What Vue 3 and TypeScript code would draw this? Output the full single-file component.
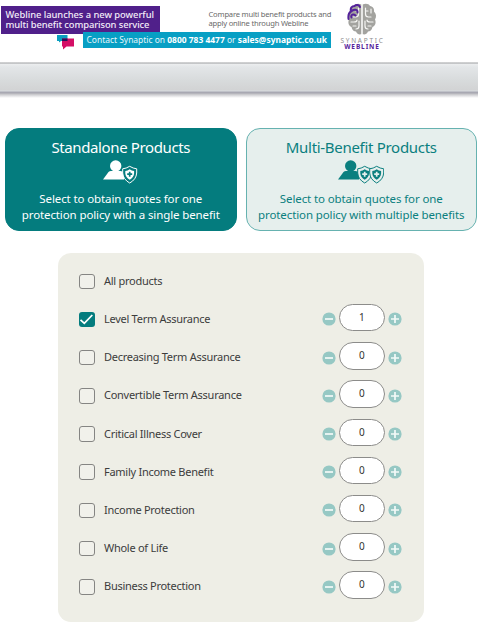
<script setup lang="ts">
import { reactive, ref } from 'vue'

interface Product {
  name: string
  selected: boolean
  count: number
}

interface Mode {
  title: string
  lines: string[]
  shields: number
}

const modes: Mode[] = [
  {
    title: 'Standalone Products',
    lines: ['Select to obtain quotes for one', 'protection policy with a single benefit'],
    shields: 1,
  },
  {
    title: 'Multi-Benefit Products',
    lines: ['Select to obtain quotes for one', 'protection policy with multiple benefits'],
    shields: 2,
  },
]

const activeMode = ref(0)
const allSelected = ref(false)

const products = reactive<Product[]>([
  { name: 'Level Term Assurance', selected: true, count: 1 },
  { name: 'Decreasing Term Assurance', selected: false, count: 0 },
  { name: 'Convertible Term Assurance', selected: false, count: 0 },
  { name: 'Critical Illness Cover', selected: false, count: 0 },
  { name: 'Family Income Benefit', selected: false, count: 0 },
  { name: 'Income Protection', selected: false, count: 0 },
  { name: 'Whole of Life', selected: false, count: 0 },
  { name: 'Business Protection', selected: false, count: 0 },
])

function setCount(product: Product, count: number) {
  product.count = Math.max(0, count)
  product.selected = product.count > 0
}

function toggle(product: Product) {
  setCount(product, product.selected ? 0 : 1)
}

function toggleAll() {
  allSelected.value = !allSelected.value
  products.forEach((p) => setCount(p, allSelected.value ? 1 : 0))
}
</script>

<template>
  <div class="page">
    <header class="banner">
      <div class="promo">
        <div class="promo-top">
          <div class="headline">
            <span class="h1">Webline launches a new powerful</span>
            <span class="h2">multi benefit comparison service</span>
          </div>
          <div class="compare">
            <span class="c1">Compare multi benefit products and</span>
            <span class="c2">apply online through Webline</span>
          </div>
        </div>
        <div class="promo-bottom">
          <svg class="bubbles" width="18" height="15" viewBox="0 0 18 15">
            <path d="M0 0h10.500v6H4l-2 1.500V6H0z" fill="#0a9fc0" />
            <path d="M5 3.500h12v8H9.500L6 14.500v-3H5z" fill="#d40f66" />
            <path d="M5 3.500h5.500V6H5z" fill="#28145c" />
          </svg>
          <div class="contact">
            Contact Synaptic on <b>0800 783 4477</b> or <b>sales@synaptic.co.uk</b>
          </div>
        </div>
      </div>
      <div class="brand">
        <svg width="30" height="33" viewBox="0 0 30 33">
          <path
            d="M14.500 1.500C11 0 8 1 7 3 4 3.500 2.500 6 3 8.500 0.500 11 .5 14 2 16.500 0.500 20 2 23 4.500 24 5 27 7 28.500 9 28.500c1 3 4 3.500 5.500 2.500zM15.500 1.500C19 0 22 1 23 3c3 .5 4.500 3 4 5.500 2.500 2.500 2.500 5.500 1 8 1.500 3.500 0 6.500-2.500 7.500-.5 3-2.500 4.500-4.500 4.500-1 3-4 3.500-5.500 2.500z"
            fill="#a3a39f"
          />
          <g fill="none" stroke="#f6f6f4" stroke-width="1.200" stroke-linecap="round">
            <path d="M15 1v30M11.500 5v6q0 3-3 3H6M4 19h3q3 0 3-2M12 18v5q0 3-3 3M6 23h3M9 8h2.500" />
            <path d="M18.500 5v6q0 3 3 3H24M26 19h-3q-3 0-3-2M18 18v5q0 3 3 3M24 23h-3M21 8h-2.500M24 6v4" />
          </g>
          <path
            d="M1.500 16c-.5-4 .5-6.500 2.500-7.500C3 5 5 3 7.500 3c2-2 5-1 5.500 1M4 8.500c3-3 7-2 6.500 1M4.500 14.500c-1-3 2-4 4-2"
            fill="none"
            stroke="#54229a"
            stroke-width="2"
            stroke-linecap="round"
          />
        </svg>
        <span class="brand-a">SYNAPTIC</span>
        <span class="brand-b">WEBLINE</span>
      </div>
    </header>

    <div class="toolbar"></div>

    <main>
      <div class="modes">
        <button
          v-for="(mode, i) in modes"
          :key="mode.title"
          type="button"
          class="mode"
          :class="{ active: activeMode === i, multi: mode.shields === 2 }"
          @click="activeMode = i"
        >
          <span class="mode-title">{{ mode.title }}</span>
          <svg
            class="mode-icon"
            :width="mode.shields === 2 ? 46 : 35"
            height="24"
            :viewBox="mode.shields === 2 ? '0 0 46 24' : '0 0 35 24'"
          >
            <circle cx="12.700" cy="6" r="5.700" fill="currentColor" />
            <path d="M0 19.500L5.500 12q1-1 2.500-1h9.500q2 0 3.500 2v6.500z" fill="currentColor" />
            <g v-for="n in mode.shields" :key="n" :transform="`translate(${19.200 + (n - 1) * 12} 5.500)`">
              <path
                class="shield"
                d="M7.500 .8Q11 3 14.500 3.300V7.500Q14 14 7.500 17.500 1 14 .5 7.500V3.300Q4 3 7.500 .8z"
              />
              <path
                d="M7.500 3.800Q9.500 5.200 11.900 5.500V8Q11.500 12 7.500 14.300 3.500 12 3.100 8V5.500Q5.500 5.200 7.500 3.800z"
                fill="currentColor"
              />
              <path class="cross" d="M7.500 6.200v5M5 8.700h5" />
            </g>
          </svg>
          <span v-for="line in mode.lines" :key="line" class="mode-line">{{ line }}</span>
        </button>
      </div>

      <section class="panel">
        <div class="row">
          <button type="button" class="box" :class="{ checked: allSelected }" @click="toggleAll">
            <svg v-if="allSelected" width="15" height="15" viewBox="0 0 15 15"><path d="M1.500 7.800L5.300 11.300 13.300 3" /></svg>
          </button>
          <span class="label">All products</span>
        </div>
        <div v-for="product in products" :key="product.name" class="row">
          <button type="button" class="box" :class="{ checked: product.selected }" @click="toggle(product)">
            <svg v-if="product.selected" width="15" height="15" viewBox="0 0 15 15"><path d="M1.500 7.800L5.300 11.300 13.300 3" /></svg>
          </button>
          <span class="label">{{ product.name }}</span>
          <div class="stepper">
            <button type="button" class="step" @click="setCount(product, product.count - 1)">
              <svg width="14" height="14" viewBox="0 0 14 14">
                <circle cx="7" cy="7" r="6.600" />
                <path d="M3 7h8" />
              </svg>
            </button>
            <span class="count">{{ product.count }}</span>
            <button type="button" class="step" @click="setCount(product, product.count + 1)">
              <svg width="14" height="14" viewBox="0 0 14 14">
                <circle cx="7" cy="7" r="6.600" />
                <path d="M3 7h8M7 3v8" />
              </svg>
            </button>
          </div>
        </div>
      </section>
    </main>
  </div>
</template>

<style>
body {
  background: #fff;
}
</style>

<style scoped>
.page {
  width: 478px;
  height: 633px;
  overflow: hidden;
  background: #fff;
  font-family: 'Noto Sans', 'Open Sans', sans-serif;
}
button {
  padding: 0;
  margin: 0;
  border: 0;
  background: none;
  font: inherit;
  color: inherit;
}
svg {
  display: block;
}
.banner {
  display: flex;
  height: 62px;
  white-space: nowrap;
}
.promo {
  flex: none;
  width: 331px;
  padding-top: 6px;
}
.promo-top {
  display: flex;
  height: 26px;
}
.headline {
  display: flex;
  flex: none;
  flex-direction: column;
  box-sizing: border-box;
  width: 159px;
  height: 28px;
  margin-left: 1px;
  padding: 3.500px 0 0 4.500px;
  background: #50208a;
  color: #f3edf8;
  font-size: 9.400px;
  font-weight: 500;
  line-height: 10.400px;
}
.h1 {
  letter-spacing: -0.050px;
}
.h2 {
  letter-spacing: -0.100px;
}
.compare {
  display: flex;
  flex-direction: column;
  margin-left: 48.500px;
  padding-top: 3.500px;
  color: #6a6a6a;
  font-size: 7.600px;
  letter-spacing: -0.200px;
  line-height: 9.500px;
}
.promo-bottom {
  display: flex;
}
.bubbles {
  margin: 3px 8px 0 57px;
}
.contact {
  box-sizing: border-box;
  width: 248px;
  height: 16px;
  padding-left: 3.500px;
  background: #079fc4;
  color: #e6f6fa;
  font-size: 8.450px;
  line-height: 15.500px;
}
.contact b {
  color: #fff;
}
.brand {
  display: flex;
  flex-direction: column;
  align-items: center;
  width: 62px;
  padding-top: 3px;
  font-size: 6.500px;
  line-height: 6.800px;
}
.brand-a {
  margin-top: 1.500px;
  margin-left: 1px;
  color: #8e8e8e;
  letter-spacing: 1.750px;
}
.brand-b {
  color: #54229a;
  font-weight: 700;
  letter-spacing: 0.900px;
}
.toolbar {
  height: 36px;
  background: linear-gradient(
    #d9d9d9 0,
    #c4c6c8 1px,
    #c4c6c8 2px,
    #eceeef 2px,
    #e3e6e8 5px,
    #d8dbdc 18px,
    #d2d3d4 28px,
    #d8dce0 29px,
    #a8a8b2 30px,
    #a8a8b2 31px,
    #c2c2c6 32px,
    #e2e2e5 34px,
    #fff 36px
  );
}
.modes {
  display: flex;
  gap: 9px;
  padding: 30px 0 0 5px;
}
.mode {
  display: flex;
  flex-direction: column;
  align-items: center;
  justify-content: flex-start;
  box-sizing: border-box;
  width: 231.500px;
  height: 103px;
  padding-top: 7.500px;
  border: 1.500px solid #66b2b0;
  border-radius: 14px;
  background: #e6efed;
  color: #0b7f7f;
  white-space: nowrap;
}
.mode.active {
  border-color: #047c7e;
  background: #047c7e;
  color: #fff;
}
.mode-title {
  font-size: 15px;
  letter-spacing: -0.380px;
  line-height: 20px;
}
.multi .mode-title {
  letter-spacing: -0.300px;
}
.mode-icon {
  margin-top: 3px;
  margin-bottom: 7.500px;
}
.shield {
  fill: #e6efed;
  stroke: currentColor;
  stroke-width: 1;
}
.cross {
  fill: none;
  stroke: #e6efed;
  stroke-width: 1.700;
}
.active .shield {
  fill: #047c7e;
}
.active .cross {
  stroke: #047c7e;
}
.mode-line {
  font-size: 11.500px;
  letter-spacing: -0.110px;
  line-height: 16px;
}
.panel {
  box-sizing: border-box;
  width: 366px;
  height: 369px;
  margin: 22px 0 0 58px;
  padding: 9.200px 22px 0 21px;
  border-radius: 13px;
  background: #eeeee6;
}
.row {
  display: flex;
  align-items: center;
  height: 38.200px;
}
.box {
  box-sizing: border-box;
  width: 15.500px;
  height: 15.500px;
  border: 1.500px solid #858583;
  border-radius: 3px;
  background: #f1f1eb;
}
.box.checked {
  border: 0;
  background: #047c7e;
}
.box path {
  fill: none;
  stroke: #fff;
  stroke-width: 1.800;
}
.label {
  margin-top: -1px;
  margin-left: 9.500px;
  color: #3c3c3c;
  font-size: 11px;
  letter-spacing: -0.270px;
  line-height: 16px;
}
.stepper {
  display: flex;
  align-items: center;
  gap: 3px;
  margin-top: -2px;
  margin-left: auto;
}
.step {
  margin-top: 2px;
}
.step circle {
  fill: #96c8c4;
}
.step path {
  fill: none;
  stroke: #f4faf8;
  stroke-width: 1.700;
}
.count {
  box-sizing: border-box;
  width: 46.500px;
  height: 27.500px;
  margin-top: -1.500px;
  border: 1.500px solid #8c8c8a;
  border-radius: 14px;
  background: #fff;
  color: #333;
  font-size: 10px;
  line-height: 25px;
  text-align: center;
}
</style>
